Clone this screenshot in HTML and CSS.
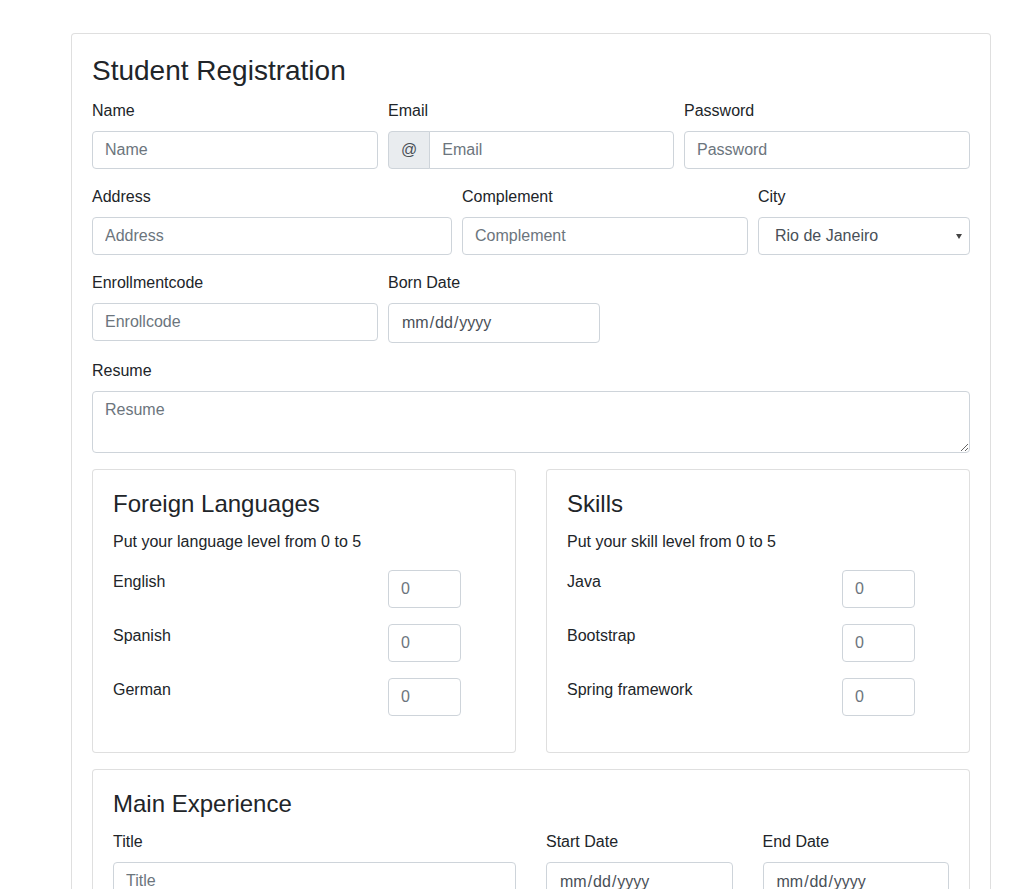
FILE: index.html
```html
<!DOCTYPE html>
<html lang="en">
<head>
<meta charset="utf-8">
<title>Student Registration</title>
<link rel="stylesheet" href="styles.css">
</head>
<body>
<form class="card main-card">
  <h3 class="page-title">Student Registration</h3>

  <div class="form-row row-3">
    <div class="form-group">
      <label for="name">Name</label>
      <input id="name" class="form-control" type="text" placeholder="Name">
    </div>
    <div class="form-group">
      <label for="email">Email</label>
      <div class="input-group">
        <span class="input-group-text">@</span>
        <input id="email" class="form-control" type="email" placeholder="Email">
      </div>
    </div>
    <div class="form-group">
      <label for="password">Password</label>
      <input id="password" class="form-control" type="password" placeholder="Password">
    </div>
  </div>

  <div class="form-row row-address">
    <div class="form-group">
      <label for="address">Address</label>
      <input id="address" class="form-control" type="text" placeholder="Address">
    </div>
    <div class="form-group">
      <label for="complement">Complement</label>
      <input id="complement" class="form-control" type="text" placeholder="Complement">
    </div>
    <div class="form-group">
      <label for="city">City</label>
      <div class="select-wrap">
        <select id="city" class="form-control select">
          <option>Rio de Janeiro</option>
          <option>São Paulo</option>
          <option>Belo Horizonte</option>
        </select>
      </div>
    </div>
  </div>

  <div class="form-row row-enroll">
    <div class="form-group">
      <label for="enroll">Enrollmentcode</label>
      <input id="enroll" class="form-control" type="text" placeholder="Enrollcode">
    </div>
    <div class="form-group">
      <label for="born">Born Date</label>
      <input id="born" class="form-control date" type="date">
    </div>
  </div>

  <div class="form-group">
    <label for="resume">Resume</label>
    <textarea id="resume" class="form-control textarea" rows="2" placeholder="Resume"></textarea>
  </div>

  <div class="cards-row">
    <div class="card sub-card">
      <h4 class="card-title">Foreign Languages</h4>
      <p class="card-text">Put your language level from 0 to 5</p>
      <div class="level-row">
        <label for="lang-en">English</label>
        <input id="lang-en" class="form-control" type="number" min="0" max="5" placeholder="0">
      </div>
      <div class="level-row">
        <label for="lang-es">Spanish</label>
        <input id="lang-es" class="form-control" type="number" min="0" max="5" placeholder="0">
      </div>
      <div class="level-row">
        <label for="lang-de">German</label>
        <input id="lang-de" class="form-control" type="number" min="0" max="5" placeholder="0">
      </div>
    </div>
    <div class="card sub-card">
      <h4 class="card-title">Skills</h4>
      <p class="card-text">Put your skill level from 0 to 5</p>
      <div class="level-row">
        <label for="sk-java">Java</label>
        <input id="sk-java" class="form-control" type="number" min="0" max="5" placeholder="0">
      </div>
      <div class="level-row">
        <label for="sk-bs">Bootstrap</label>
        <input id="sk-bs" class="form-control" type="number" min="0" max="5" placeholder="0">
      </div>
      <div class="level-row">
        <label for="sk-spring">Spring framework</label>
        <input id="sk-spring" class="form-control" type="number" min="0" max="5" placeholder="0">
      </div>
    </div>
  </div>

  <div class="card sub-card experience">
    <h4 class="card-title exp-title">Main Experience</h4>
    <div class="exp-row">
      <div class="form-group">
        <label for="exp-title">Title</label>
        <input id="exp-title" class="form-control" type="text" placeholder="Title">
      </div>
      <div class="form-group">
        <label for="exp-start">Start Date</label>
        <input id="exp-start" class="form-control date" type="date">
      </div>
      <div class="form-group">
        <label for="exp-end">End Date</label>
        <input id="exp-end" class="form-control date" type="date">
      </div>
    </div>
    <div class="form-group">
      <label for="exp-desc">Description</label>
      <textarea id="exp-desc" class="form-control textarea" rows="2" placeholder="Description"></textarea>
    </div>
  </div>
</form>
</body>
</html>
```

FILE: styles.css
```css
html {
  scrollbar-width: none;
}
html::-webkit-scrollbar {
  display: none;
}
* {
  box-sizing: border-box;
}
body {
  margin: 0;
  font-family: "Liberation Sans", Arial, sans-serif;
  font-size: 16px;
  line-height: 1.5;
  color: #212529;
  background: #fff;
}

.card {
  border: 1px solid rgba(0, 0, 0, 0.125);
  border-radius: 4px;
  background: #fff;
}

.main-card {
  width: 920px;
  margin: 33px 0 40px 71px;
  padding: 20px;
}

.page-title {
  font-size: 28px;
  font-weight: 400;
  line-height: 1.2;
  margin: 0 0 11px;
}

.form-row {
  display: grid;
  column-gap: 10px;
}
.row-3 {
  grid-template-columns: 1fr 1fr 1fr;
}
.row-address {
  grid-template-columns: 360fr 286fr 212fr;
}
.row-enroll {
  grid-template-columns: 286px 212px;
  align-items: start;
}

.form-group {
  margin-bottom: 16px;
  min-width: 0;
}

label {
  display: inline-block;
  margin-bottom: 8px;
}

.form-control {
  display: block;
  width: 100%;
  height: 38px;
  padding: 6px 12px;
  font-family: inherit;
  font-size: 16px;
  line-height: 24px;
  color: #495057;
  background: #fff;
  border: 1px solid #ced4da;
  border-radius: 4px;
  margin: 0;
}
.form-control::placeholder {
  color: #6c757d;
  opacity: 1;
}

.date {
  height: 40px;
}
.date::-webkit-calendar-picker-indicator {
  display: none;
}
.date::-webkit-inner-spin-button {
  display: none;
}

.input-group {
  display: flex;
}
.input-group-text {
  display: flex;
  align-items: center;
  padding: 6px 12px;
  height: 38px;
  color: #495057;
  background: #e9ecef;
  border: 1px solid #ced4da;
  border-radius: 4px 0 0 4px;
  line-height: 24px;
}
.input-group .form-control {
  flex: 1 1 auto;
  width: 1%;
  margin-left: -1px;
  border-radius: 0 4px 4px 0;
}

.select-wrap {
  position: relative;
}
.select {
  appearance: none;
  -webkit-appearance: none;
  padding-left: 16px;
  padding-right: 24px;
}
.select-wrap::after {
  content: "";
  position: absolute;
  right: 8px;
  top: 17px;
  border-left: 3px solid transparent;
  border-right: 3px solid transparent;
  border-top: 5px solid #444;
  pointer-events: none;
}

.textarea {
  height: 62px;
  resize: vertical;
}

.cards-row {
  display: grid;
  grid-template-columns: 1fr 1fr;
  column-gap: 30px;
}

.sub-card {
  padding: 20px;
  margin-bottom: 16px;
}

.card-title {
  font-size: 24px;
  font-weight: 400;
  line-height: 1.2;
  margin: 0 0 12px;
}
.exp-title {
  margin-bottom: 11px;
}

.card-text {
  margin: 0 0 16px;
}

.level-row {
  display: grid;
  grid-template-columns: 245px 73px;
  column-gap: 30px;
  margin-bottom: 16px;
  align-items: start;
}
.level-row label {
  margin-bottom: 0;
}
.level-row input::-webkit-inner-spin-button,
.level-row input::-webkit-outer-spin-button {
  -webkit-appearance: none;
  margin: 0;
}

.exp-row {
  display: grid;
  grid-template-columns: 403fr 186.5fr 186.5fr;
  column-gap: 30px;
}
```
